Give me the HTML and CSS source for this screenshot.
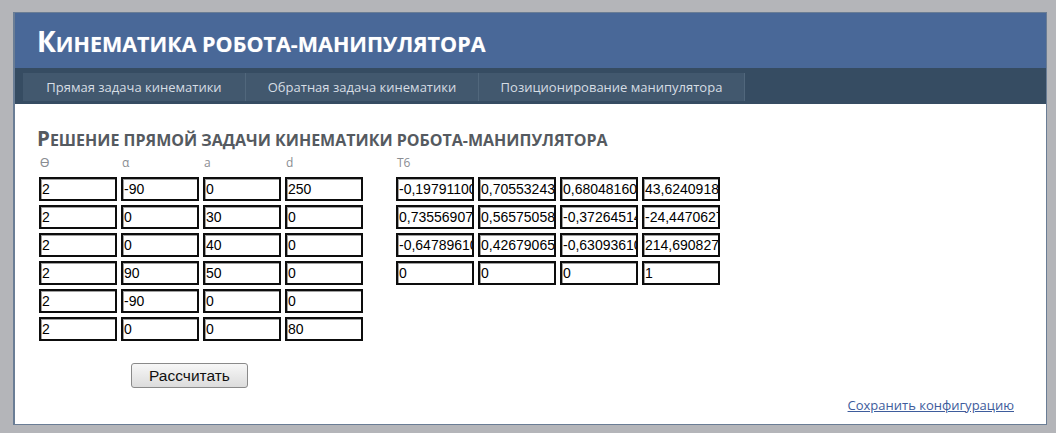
FILE: index.html
```html
<!DOCTYPE html>
<html lang="ru">
<head>
<meta charset="utf-8">
<title>Кинематика робота-манипулятора</title>
<link rel="stylesheet" href="styles.css">
</head>
<body>
<div class="page">
  <header class="header">
    <h1 class="site-title">Кинематика робота-манипулятора</h1>
  </header>
  <nav class="nav">
    <a class="tab" href="#">Прямая задача кинематики</a>
    <a class="tab" href="#">Обратная задача кинематики</a>
    <a class="tab" href="#">Позиционирование манипулятора</a>
  </nav>
  <main class="content">
    <h2 class="section-title">Решение прямой задачи кинематики робота-манипулятора</h2>
    <div class="tables">
      <div class="params">
        <div class="grid4">
          <span class="label">ϴ</span><span class="label">α</span><span class="label">a</span><span class="label">d</span>
          <input class="cell" value="2"><input class="cell" value="-90"><input class="cell" value="0"><input class="cell" value="250">
          <input class="cell" value="2"><input class="cell" value="0"><input class="cell" value="30"><input class="cell" value="0">
          <input class="cell" value="2"><input class="cell" value="0"><input class="cell" value="40"><input class="cell" value="0">
          <input class="cell" value="2"><input class="cell" value="90"><input class="cell" value="50"><input class="cell" value="0">
          <input class="cell" value="2"><input class="cell" value="-90"><input class="cell" value="0"><input class="cell" value="0">
          <input class="cell" value="2"><input class="cell" value="0"><input class="cell" value="0"><input class="cell" value="80">
        </div>
        <button class="calc" type="button">Рассчитать</button>
      </div>
      <div class="matrix">
        <div class="grid4">
          <span class="label label-wide">T6</span>
          <input class="cell" value="-0,197911007"><input class="cell" value="0,705532434"><input class="cell" value="0,680481601"><input class="cell" value="43,6240918">
          <input class="cell" value="0,735569079"><input class="cell" value="0,565750583"><input class="cell" value="-0,37264514"><input class="cell" value="-24,4470627">
          <input class="cell" value="-0,647896101"><input class="cell" value="0,426790653"><input class="cell" value="-0,630936101"><input class="cell" value="214,690827">
          <input class="cell" value="0"><input class="cell" value="0"><input class="cell" value="0"><input class="cell" value="1">
        </div>
      </div>
    </div>
    <div class="footer-row">
      <a class="save-link" href="#">Сохранить конфигурацию</a>
    </div>
  </main>
</div>
</body>
</html>
```
FILE: styles.css
```css
* { box-sizing: border-box; }

html, body { height: 100%; }

body {
  margin: 0;
  padding: 12px 9px 8px 13px;
  background: #b4b5b9;
  font-family: "Open Sans", "Liberation Sans", sans-serif;
}

.page {
  height: 413px;
  background: #ffffff;
  border: 1px solid #6a7d95;
  border-left-width: 2px;
  display: flex;
  flex-direction: column;
}

.header {
  height: 55px;
  background: #496898;
  display: flex;
  align-items: center;
  padding: 4px 0 0 22px;
}

/* small-caps look: uppercase body with an enlarged initial */
.site-title {
  margin: 0;
  color: #ffffff;
  font-size: 21.5px;
  font-weight: 700;
  text-transform: uppercase;
  line-height: 34px;
  text-shadow: 0 0 1px rgba(255,255,255,0.4);
}

.site-title::first-letter { font-size: 28px; }

.nav {
  height: 36px;
  background: #364c62;
  display: flex;
  padding: 5px 0 3px 8px;
}

.tab {
  display: flex;
  align-items: center;
  justify-content: center;
  height: 28px;
  background: #42586e;
  border-right: 1px solid #51677c;
  color: #d6dde4;
  font-size: 13px;
  text-decoration: none;
}

.tab:nth-child(1) { width: 223px; }
.tab:nth-child(2) { width: 233px; }
.tab:nth-child(3) { width: 266px; }

.content {
  flex: 1;
  display: flex;
  flex-direction: column;
  padding: 21px 32px 10px 24px;
}

.section-title {
  margin: 0 0 3px -2px;
  color: #555a60;
  font-size: 16px;
  font-weight: 700;
  text-transform: uppercase;
  line-height: 26px;
}

.section-title::first-letter { font-size: 20.5px; }

.tables {
  display: flex;
  gap: 33px;
}

.grid4 {
  display: grid;
  grid-template-columns: repeat(4, 78px);
  grid-template-rows: 17px;
  grid-auto-rows: 24px;
  column-gap: 4px;
  row-gap: 4px;
}

.label {
  height: 14px;
  color: #8a8d92;
  font-size: 12px;
  line-height: 14px;
  align-self: start;
  padding-left: 1px;
}

.label-wide { grid-column: 1 / span 4; }

.cell {
  width: 78px;
  height: 24px;
  margin: 0;
  padding: 0 0 0 1px;
  border: 2px solid #0d0d0d;
  box-shadow: inset 1px 1px 0 #a0a0a0;
  background: #fff;
  font-family: "Liberation Sans", Arial, sans-serif;
  font-size: 14px;
  color: #000;
  outline: none;
}

.params {
  display: flex;
  flex-direction: column;
}

.calc {
  align-self: flex-start;
  margin: 22px 0 0 92px;
  width: 117px;
  height: 25px;
  padding: 0;
  border: 1px solid #8a8a8a;
  border-radius: 3px;
  background: linear-gradient(#f7f7f7, #dcdcdc);
  font-family: "Liberation Sans", Arial, sans-serif;
  font-size: 15.5px;
  color: #111;
}

.footer-row {
  margin-top: auto;
  display: flex;
  justify-content: flex-end;
}

.save-link {
  color: #3e5c9c;
  font-size: 13px;
  text-decoration: underline;
}
```
